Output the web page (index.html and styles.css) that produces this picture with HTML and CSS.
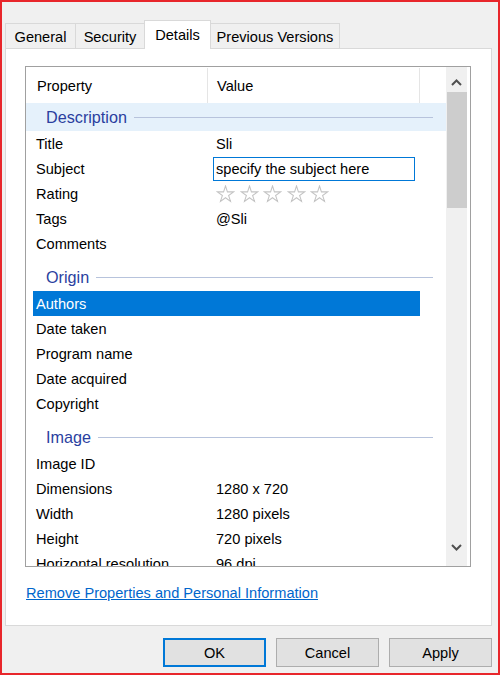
FILE: index.html
```html
<!DOCTYPE html>
<html>
<head>
<meta charset="utf-8">
<link rel="stylesheet" href="styles.css">
</head>
<body>
<div class="window">
  <div class="tabs">
    <div class="tab tab-general">General</div>
    <div class="tab tab-security">Security</div>
    <div class="tab tab-details active">Details</div>
    <div class="tab tab-previous">Previous Versions</div>
  </div>
  <div class="panel">
    <div class="list">
      <div class="list-content">
        <div class="header">
          <div class="hcell hname">Property</div>
          <div class="hcell hvalue">Value</div>
          <div class="hcell hrest"></div>
        </div>
        <div class="group first focused"><span class="gtitle">Description</span><span class="gline"></span></div>
        <div class="row"><div class="name">Title</div><div class="value">Sli</div></div>
        <div class="row"><div class="name">Subject</div><div class="value"><div class="textbox">specify the subject here</div></div></div>
        <div class="row"><div class="name">Rating</div><div class="value stars">
          <svg class="star" viewBox="0 0 20 20"><path d="M10 1 L12.02 7.22 L18.56 7.22 L13.27 11.06 L15.29 17.28 L10 13.44 L4.71 17.28 L6.73 11.06 L1.44 7.22 L7.98 7.22 Z"/></svg>
          <svg class="star" viewBox="0 0 20 20"><path d="M10 1 L12.02 7.22 L18.56 7.22 L13.27 11.06 L15.29 17.28 L10 13.44 L4.71 17.28 L6.73 11.06 L1.44 7.22 L7.98 7.22 Z"/></svg>
          <svg class="star" viewBox="0 0 20 20"><path d="M10 1 L12.02 7.22 L18.56 7.22 L13.27 11.06 L15.29 17.28 L10 13.44 L4.71 17.28 L6.73 11.06 L1.44 7.22 L7.98 7.22 Z"/></svg>
          <svg class="star" viewBox="0 0 20 20"><path d="M10 1 L12.02 7.22 L18.56 7.22 L13.27 11.06 L15.29 17.28 L10 13.44 L4.71 17.28 L6.73 11.06 L1.44 7.22 L7.98 7.22 Z"/></svg>
          <svg class="star" viewBox="0 0 20 20"><path d="M10 1 L12.02 7.22 L18.56 7.22 L13.27 11.06 L15.29 17.28 L10 13.44 L4.71 17.28 L6.73 11.06 L1.44 7.22 L7.98 7.22 Z"/></svg>
        </div></div>
        <div class="row"><div class="name">Tags</div><div class="value">@Sli</div></div>
        <div class="row"><div class="name">Comments</div><div class="value"></div></div>
        <div class="group"><span class="gtitle">Origin</span><span class="gline"></span></div>
        <div class="row selected"><div class="name">Authors</div><div class="value"></div></div>
        <div class="row"><div class="name">Date taken</div><div class="value"></div></div>
        <div class="row"><div class="name">Program name</div><div class="value"></div></div>
        <div class="row"><div class="name">Date acquired</div><div class="value"></div></div>
        <div class="row"><div class="name">Copyright</div><div class="value"></div></div>
        <div class="group"><span class="gtitle">Image</span><span class="gline"></span></div>
        <div class="row"><div class="name">Image ID</div><div class="value"></div></div>
        <div class="row"><div class="name">Dimensions</div><div class="value">1280 x 720</div></div>
        <div class="row"><div class="name">Width</div><div class="value">1280 pixels</div></div>
        <div class="row"><div class="name">Height</div><div class="value">720 pixels</div></div>
        <div class="row"><div class="name">Horizontal resolution</div><div class="value">96 dpi</div></div>
      </div>
      <div class="scrollbar">
        <div class="sb-arrow sb-up">
          <svg width="11" height="7" viewBox="0 0 11 7"><polyline points="1,6 5.5,1.5 10,6" fill="none" stroke="#505050" stroke-width="2"/></svg>
        </div>
        <div class="sb-thumb"></div>
        <div class="sb-track"></div>
        <div class="sb-arrow sb-down">
          <svg width="11" height="7" viewBox="0 0 11 7"><polyline points="1,1 5.5,5.5 10,1" fill="none" stroke="#505050" stroke-width="2"/></svg>
        </div>
      </div>
    </div>
    <a class="link" href="#">Remove Properties and Personal Information</a>
  </div>
  <div class="buttons">
    <div class="btn default">OK</div>
    <div class="btn">Cancel</div>
    <div class="btn">Apply</div>
  </div>
</div>
</body>
</html>
```

FILE: styles.css
```css
html, body {
  margin: 0;
  padding: 0;
}
body {
  font-family: "Liberation Sans", Arial, sans-serif;
  font-size: 14.6px;
  color: #000;
  background: #f0f0f0;
}
.window {
  box-sizing: border-box;
  width: 500px;
  height: 675px;
  border: 2px solid #e8262b;
  background: #f0f0f0;
  display: flex;
  flex-direction: column;
}
.tabs {
  display: flex;
  align-items: flex-end;
  margin-top: 18px;
  padding-left: 3px;
  height: 28px;
}
.tab {
  box-sizing: border-box;
  height: 25px;
  border: 1px solid #d9d9d9;
  border-bottom: none;
  background: #f0f0f0;
  display: flex;
  align-items: center;
  justify-content: center;
  margin-right: -1px;
  padding-top: 2px;
}
.tab-general { width: 71px; }
.tab-security { width: 70px; }
.tab-details { width: 67px; }
.tab-previous { width: 130px; }
.tab.active {
  height: 29px;
  background: #fff;
  margin-bottom: -1px;
  position: relative;
  z-index: 1;
  padding-top: 0;
}
.panel {
  box-sizing: border-box;
  margin-left: 3px;
  width: 487px;
  height: 578px;
  border: 1px solid #d9d9d9;
  background: #fff;
  padding: 17px 0 0 19px;
  display: flex;
  flex-direction: column;
  align-items: flex-start;
}
.list {
  box-sizing: border-box;
  width: 446px;
  height: 501px;
  border: 1px solid #a0a0a0;
  display: flex;
  padding-right: 3px;
  background: #fff;
}
.list-content {
  width: 420px;
  overflow: hidden;
  display: flex;
  flex-direction: column;
  padding-top: 1px;
}
.header {
  display: flex;
  height: 36px;
  flex: none;
}
.hcell {
  box-sizing: border-box;
  display: flex;
  align-items: center;
  height: 36px;
}
.hname {
  width: 181px;
  padding-left: 11px;
}
.hvalue {
  width: 213px;
  padding-left: 9px;
  border-left: 1px solid #e5e5e5;
  border-right: 1px solid #e5e5e5;
}
.hrest {
  flex: 1;
}
.group {
  flex: none;
  height: 28px;
  margin-top: 7px;
  display: flex;
  align-items: center;
  padding-left: 20px;
}
.group.first {
  margin-top: -1px;
}
.group.focused {
  background: #e5f1fb;
}
.gtitle {
  font-size: 16.2px;
  color: #2b3f9f;
}
.gline {
  flex: 1;
  height: 1px;
  background: #b7c3dc;
  margin-left: 7px;
  margin-right: 13px;
}
.row {
  flex: none;
  display: flex;
  align-items: center;
  height: 25px;
  width: 387px;
  margin-left: 7px;
}
.row.selected {
  background: #0078d7;
  color: #fff;
}
.name {
  box-sizing: border-box;
  width: 174px;
  padding-left: 3px;
  white-space: nowrap;
}
.value {
  box-sizing: border-box;
  padding-left: 9px;
  white-space: nowrap;
  display: flex;
  align-items: center;
}
.textbox {
  box-sizing: border-box;
  margin-left: -3px;
  width: 202px;
  height: 24px;
  border: 1px solid #0078d7;
  padding-left: 2px;
  display: flex;
  align-items: center;
}
.stars {
  padding-left: 9px;
  gap: 4.5px;
  margin-top: 2px;
}
.star {
  width: 19px;
  height: 19px;
  fill: #fff;
  stroke: #c4c4c4;
  stroke-width: 1.1;
}
.scrollbar {
  width: 21px;
  background: #f0f0f0;
  display: flex;
  flex-direction: column;
  align-items: center;
}
.sb-arrow {
  height: 25px;
  width: 21px;
  display: flex;
  align-items: center;
  justify-content: center;
  flex: none;
}
.sb-up {
  padding-top: 6px;
  box-sizing: border-box;
}
.sb-down {
  height: 30px;
  padding-bottom: 8px;
  box-sizing: border-box;
}
.sb-thumb {
  width: 20px;
  height: 116px;
  background: #cdcdcd;
  flex: none;
}
.sb-track {
  flex: 1;
}
.link {
  margin-top: 18px;
  margin-left: 1px;
  color: #0066cc;
  text-decoration: underline;
  font-size: 14.6px;
}
.buttons {
  display: flex;
  justify-content: flex-end;
  gap: 10px;
  margin-top: 12px;
  padding-right: 6px;
}
.btn {
  box-sizing: border-box;
  width: 103px;
  height: 29px;
  border: 1px solid #adadad;
  background: #e1e1e1;
  display: flex;
  align-items: center;
  justify-content: center;
}
.btn.default {
  border: 2px solid #0078d7;
}
```
